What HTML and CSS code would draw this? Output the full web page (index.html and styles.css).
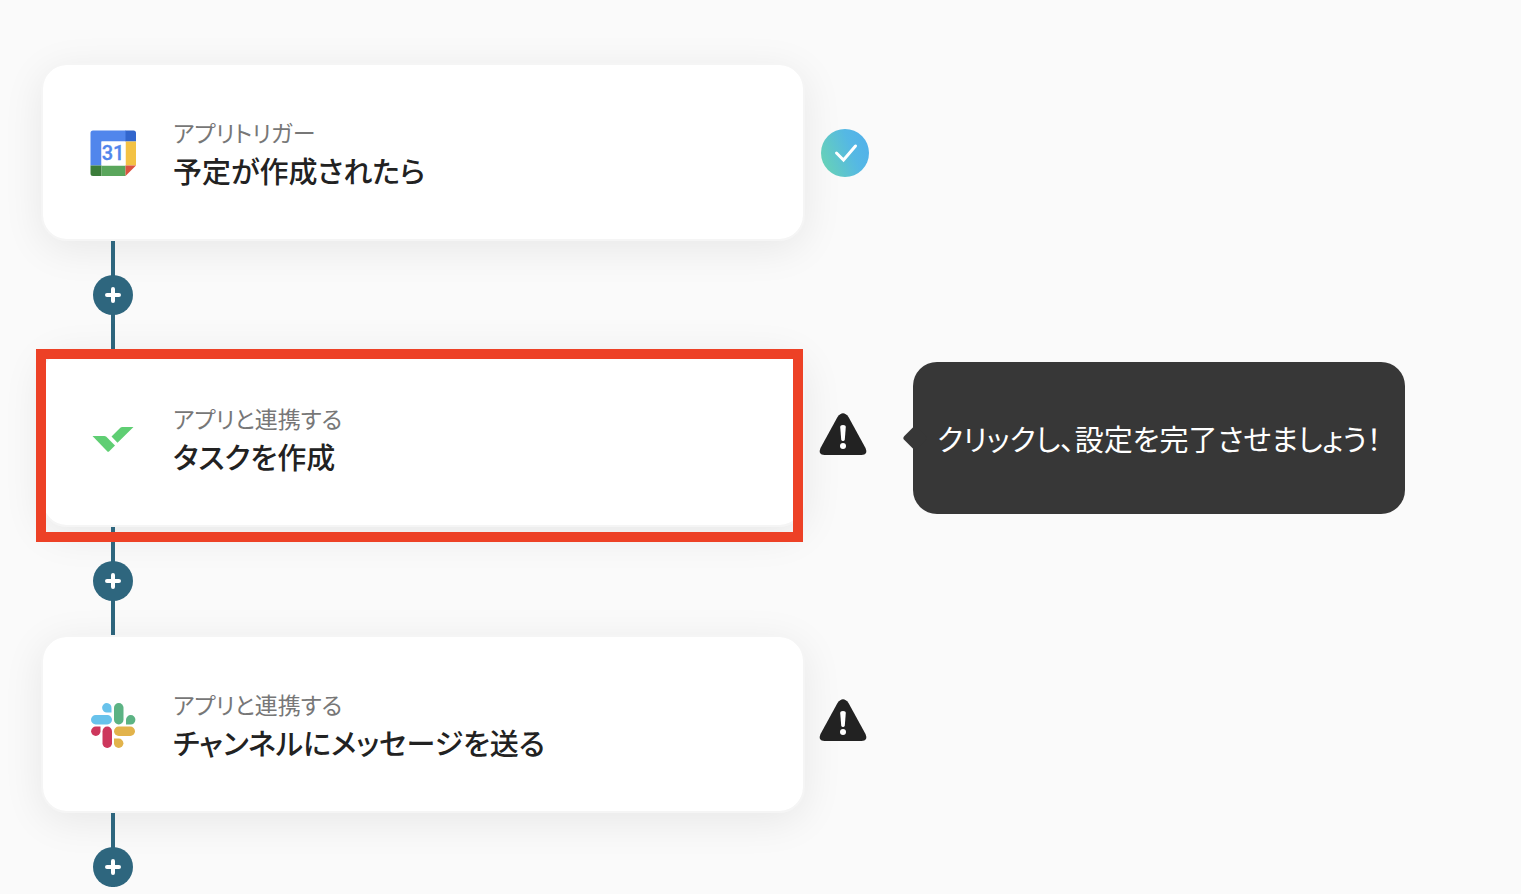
FILE: index.html
```html
<!DOCTYPE html>
<html lang="ja">
<head>
    <meta charset="utf-8">
    <meta name="viewport" content="width=device-width, initial-scale=1">
    <title>フロー</title>
    <link rel="stylesheet" href="styles.css">
</head>
<body>
    <main class="flow">
        <div class="step">
            <button type="button" class="card">
                <svg class="app-icon" viewBox="0 -1 48 48" aria-hidden="true">
                    <path fill="#5186ec" d="M4 1.500h33v11H12.500v24H1.500V4A2.500 2.500 0 0 1 4 1.500z"/>
                    <path fill="#3266cd" d="M36.500 1.500h8A2.500 2.500 0 0 1 47 4v8.500H36.500z"/>
                    <path fill="#f3c244" d="M36.500 12.500H47v24H36.500z"/>
                    <path fill="#3b7d3a" d="M1.500 36.500h11V47H4a2.500 2.500 0 0 1-2.500-2.500z"/>
                    <path fill="#5aa65c" d="M12.500 36.500h24V47h-24z"/>
                    <path fill="#dc5240" d="M36.500 36.500H47L36.500 47z"/>
                    <path fill="#fff" d="M12.500 12.500h24v24h-24z"/>
                    <text class="cal-day" x="24" y="31" text-anchor="middle">31</text>
                </svg>
                <span class="text">
                    <span class="type">アプリトリガー</span>
                    <span class="name">予定が作成されたら</span>
                </span>
            </button>
            <svg class="status" viewBox="0 0 48 48" role="img" aria-label="設定済み">
                <defs>
                    <linearGradient id="done" x1="0" y1=".7" x2="1" y2=".3">
                        <stop offset="0" stop-color="#67d2b6"/>
                        <stop offset=".65" stop-color="#55b8e4"/>
                        <stop offset="1" stop-color="#52b1ea"/>
                    </linearGradient>
                </defs>
                <circle cx="24" cy="24" r="24" fill="url(#done)"/>
                <path d="M15.500 24l7 7L34.500 17" fill="none" stroke="#fff" stroke-width="3" stroke-linecap="round"/>
            </svg>
        </div>
        <div class="link">
            <button type="button" class="add" aria-label="追加">
                <svg viewBox="0 0 16 16"><path d="M8 2v12M2 8h12"/></svg>
            </button>
        </div>

        <div class="step">
            <button type="button" class="card selected">
                <svg class="app-icon" viewBox="0 0 48 48" aria-hidden="true">
                    <g fill="#5fce73">
                        <path d="M3.500 22h11.800q1.200 0 2 .8l8.700 8.700-6 6q-.8.600-1.600-.1z"/>
                        <path d="M44.500 13H33.300q-1.200 0-2 .8l-8.800 8.700 6 6.200z"/>
                    </g>
                </svg>
                <span class="text">
                    <span class="type">アプリと連携する</span>
                    <span class="name">タスクを作成</span>
                </span>
            </button>
            <svg class="status warn" viewBox="0 4 48 48" role="img" aria-label="未設定">
                <path fill="#222" d="M18.500 6q5.500-7.500 11 0L46.500 37q3 7-4 7H5.500q-7 0-4-7z"/>
                <path fill="#fff" d="M21.200 16q0-2 2.800-2t2.800 2l-1 12.500q-.3 1.500-1.800 1.500t-1.800-1.500z"/>
                <circle cx="24" cy="35" r="3" fill="#fff"/>
            </svg>
            <p class="tip">クリックし、設定を完了させましょう！</p>
        </div>
        <div class="link">
            <button type="button" class="add" aria-label="追加">
                <svg viewBox="0 0 16 16"><path d="M8 2v12M2 8h12"/></svg>
            </button>
        </div>

        <div class="step">
            <button type="button" class="card">
                <svg class="app-icon" viewBox="0 -1 48 48" aria-hidden="true">
                    <g fill="#68c2eb">
                        <path d="M22.500 11.500H18A4.700 4.700 0 1 1 22.500 7z"/>
                        <rect x="2" y="14" width="21" height="9.500" rx="4.700"/>
                    </g>
                    <g fill="#5cb384">
                        <rect x="25" y="2" width="9.500" height="21.500" rx="4.700"/>
                        <path d="M37 23.500v-4.800a4.700 4.700 0 1 1 4.700 4.800z"/>
                    </g>
                    <g fill="#cd375c">
                        <path d="M11.500 25.500v4.700a4.700 4.700 0 1 1-4.700-4.700z"/>
                        <rect x="13.500" y="25.500" width="9.500" height="21.500" rx="4.700"/>
                    </g>
                    <g fill="#e2b34b">
                        <rect x="25" y="25.500" width="21" height="9.500" rx="4.700"/>
                        <path d="M25 37.500h4.700a4.700 4.700 0 1 1-4.700 4.700z"/>
                    </g>
                </svg>
                <span class="text">
                    <span class="type">アプリと連携する</span>
                    <span class="name">チャンネルにメッセージを送る</span>
                </span>
            </button>
            <svg class="status warn" viewBox="0 4 48 48" role="img" aria-label="未設定">
                <path fill="#222" d="M18.500 6q5.500-7.500 11 0L46.500 37q3 7-4 7H5.500q-7 0-4-7z"/>
                <path fill="#fff" d="M21.200 16q0-2 2.800-2t2.800 2l-1 12.500q-.3 1.500-1.800 1.500t-1.800-1.500z"/>
                <circle cx="24" cy="35" r="3" fill="#fff"/>
            </svg>
        </div>
        <div class="link last">
            <button type="button" class="add" aria-label="追加">
                <svg viewBox="0 0 16 16"><path d="M8 2v12M2 8h12"/></svg>
            </button>
        </div>
    </main>
</body>
</html>
```
FILE: styles.css
```css
* {
    box-sizing: border-box;
}
body {
    margin: 0;
    background: #fafafa;
    color: #222;
    font-family: "Noto Sans CJK JP", sans-serif;
    font-feature-settings: "palt";
}
button {
    font: inherit;
    color: inherit;
    cursor: pointer;
}
.flow {
    padding: 63px 40px 0 41px;
}

/* step */
.step {
    display: flex;
    align-items: center;
}
.card {
    position: relative;
    display: flex;
    align-items: center;
    gap: 36px;
    width: 764px;
    padding: 49px 46px;
    border: 2px solid #f5f5f5;
    border-radius: 26px;
    background: #fff;
    background-clip: padding-box;
    box-shadow: 0 8px 40px rgba(0, 0, 0, .08);
    text-align: left;
}
.app-icon {
    flex: none;
    width: 48px;
    height: 48px;
}
.cal-day {
    fill: #5186ec;
    stroke: #5186ec;
    stroke-width: .3;
    font: 500 20px Roboto, sans-serif;
}
.text {
    display: flex;
    flex-direction: column;
}
.type {
    color: #777;
    font-size: 23px;
    line-height: 36px;
}
.name {
    font-size: 29px;
    font-weight: 500;
    line-height: 40px;
}
.status {
    position: relative;
    flex: none;
    width: 48px;
    height: 48px;
    margin: 2px 0 0 16px;
}
.warn {
    margin-left: 14px;
    overflow: visible;
}

/* highlighted step, offsets count from inside the card border */
.selected::after {
    content: "";
    position: absolute;
    z-index: 2;
    top: -2px;
    right: 0;
    bottom: -17px;
    left: -7px;
    border: 10px solid #ed4126;
    pointer-events: none;
}

/* tooltip */
.tip {
    position: relative;
    margin: 0 0 0 46px;
    padding: 56px 24px;
    border-radius: 24px;
    background: #373737;
    color: #fff;
    font-size: 29px;
    line-height: 40px;
}
.tip::before {
    content: "";
    position: absolute;
    top: 50%;
    left: -7px;
    width: 18px;
    height: 18px;
    border-radius: 3px;
    background: #373737;
    transform: translateY(-50%) rotate(45deg);
}

/* connector */
.link {
    position: relative;
    width: 40px;
    margin-left: 52px;
    padding: 34px 0;
    background: linear-gradient(#2e667e, #2e667e) center / 4px 100% no-repeat;
}
.last {
    padding-bottom: 0;
}
.add {
    display: flex;
    align-items: center;
    justify-content: center;
    width: 40px;
    height: 40px;
    padding: 0;
    border: 0;
    border-radius: 50%;
    background: #2e667e;
}
.add svg {
    width: 16px;
    height: 16px;
    fill: none;
    stroke: #fff;
    stroke-width: 4;
    stroke-linecap: round;
}
```
